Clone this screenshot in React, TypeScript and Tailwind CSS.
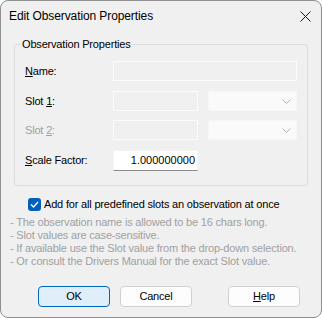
const font = { fontFamily: '"Liberation Sans", Arial, sans-serif' }

function Chevron() {
  return (
    <svg width="9" height="5" viewBox="0 0 9 5" className="shrink-0">
      <path d="M0.5 0.5 L4.5 4.5 L8.5 0.5" fill="none" stroke="#b4b4b4" strokeWidth="1" />
    </svg>
  )
}

function DisabledEdit({ w }: { w: string }) {
  return <div className={`h-[20px] ${w} border border-[#fbfbfb] bg-[#f0f0f0]`}></div>
}

function DisabledCombo() {
  return (
    <div className="ml-[10px] flex h-[20px] w-[89px] items-center justify-end border border-[#f6f6f6] bg-[#fafafa] pr-[5px]">
      <Chevron />
    </div>
  )
}

export default function App() {
  return (
    <div className="h-[318px] w-[322px] bg-white text-[11px] tracking-[-0.18px] text-black" style={font}>
      <div className="flex h-full flex-col overflow-hidden rounded-[8px] border border-[#8f8f8f] bg-[#f0f0f0]">
        <div className="flex h-[30px] shrink-0 items-center justify-between pl-[8px] pr-[10px]">
          <span className="text-[12px] tracking-[-0.1px]">Edit Observation Properties</span>
          <svg width="11" height="11" viewBox="0 0 11 11">
            <path d="M0.5 0.5 L10.5 10.5 M10.5 0.5 L0.5 10.5" stroke="#1a1a1a" strokeWidth="1" />
          </svg>
        </div>

        <fieldset className="ml-[13px] mr-[15px] mt-[7px] rounded-[3px] border border-[#dcdcdc] px-[10px] pb-[14px] pt-[10px]">
          <legend className="-ml-[4px] px-[1px] leading-[13px]">Observation Properties</legend>

          <div className="flex items-center">
            <span className="w-[88px]"><u>N</u>ame:</span>
            <DisabledEdit w="w-[184px]" />
          </div>
          <div className="mt-[10px] flex items-center">
            <span className="w-[88px]">Slot <u>1</u>:</span>
            <DisabledEdit w="w-[85px]" />
            <DisabledCombo />
          </div>
          <div className="mt-[9px] flex items-center">
            <span className="w-[88px] text-[#a0a0a0]">Slot <u>2</u>:</span>
            <DisabledEdit w="w-[85px]" />
            <DisabledCombo />
          </div>
          <div className="mt-[10px] flex items-center">
            <span className="w-[88px]"><u>S</u>cale Factor:</span>
            <div className="flex h-[21px] w-[85px] items-center justify-end border border-[#f4f4f4] border-b-[#8a8a8a] bg-white pr-[2px] tracking-normal">
              1.000000000
            </div>
          </div>
        </fieldset>

        <label className="ml-[27px] mt-[12px] flex items-center gap-[3px]">
          <span className="flex h-[13px] w-[13px] items-center justify-center rounded-[3px] bg-[#005fb8]">
            <svg width="9" height="7" viewBox="0 0 9 7">
              <path d="M1 3.5 L3.5 6 L8 1" fill="none" stroke="white" strokeWidth="1.3" />
            </svg>
          </span>
          <span className="leading-[13px]">Add for all predefined slots an observation at once</span>
        </label>

        <div className="ml-[9px] mt-[5px] leading-[13px] text-[#a0a0a0]">
          <div>- The observation name is allowed to be 16 chars long.</div>
          <div>- Slot values are case-sensitive.</div>
          <div>- If available use the Slot value from the drop-down selection.</div>
          <div>- Or consult the Drivers Manual for the exact Slot value.</div>
        </div>

        <div className="ml-[37px] mt-[18px] flex">
          <button className="h-[21px] w-[72px] rounded-[4px] border border-[#0067c0] bg-[#e0eef9]">OK</button>
          <button className="ml-[10px] h-[21px] w-[72px] rounded-[4px] border border-[#d0d0d0] bg-[#fdfdfd]">Cancel</button>
          <button className="ml-[36px] h-[21px] w-[72px] rounded-[4px] border border-[#d0d0d0] bg-[#fdfdfd]"><u>H</u>elp</button>
        </div>
      </div>
    </div>
  )
}
